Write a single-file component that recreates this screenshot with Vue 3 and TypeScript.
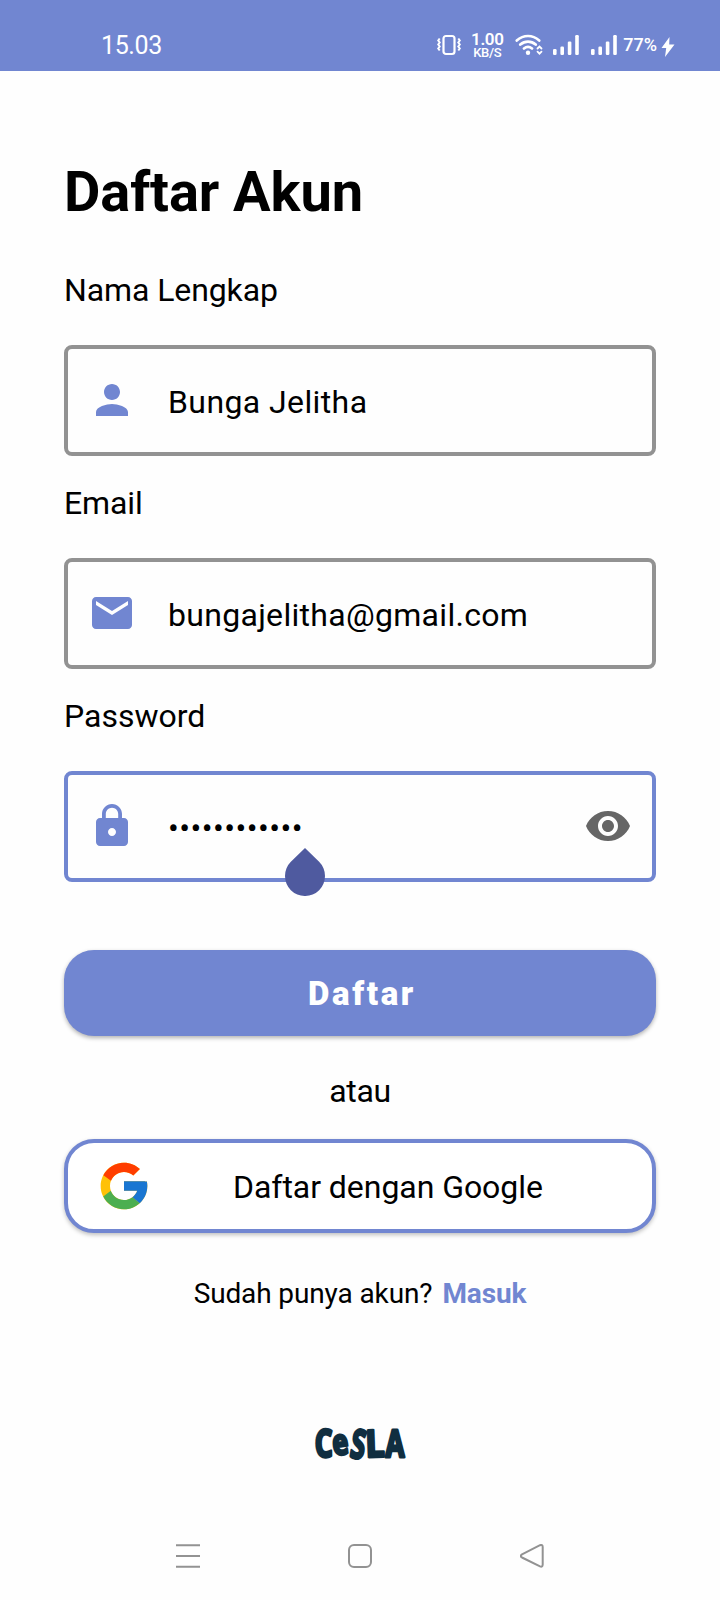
<script setup lang="ts">
import { ref } from 'vue'

interface Field {
  id: string
  label: string
  value: string
  path: string
  secret?: boolean
}

const fields = ref<Field[]>([
  {
    id: 'name',
    label: 'Nama Lengkap',
    value: 'Bunga Jelitha',
    path: 'M12 12c2.21 0 4-1.79 4-4s-1.79-4-4-4-4 1.79-4 4 1.79 4 4 4zm0 2c-2.67 0-8 1.34-8 4v2h16v-2c0-2.66-5.33-4-8-4z',
  },
  {
    id: 'email',
    label: 'Email',
    value: 'bungajelitha@gmail.com',
    path: 'M20 4H4c-1.1 0-1.99.9-1.99 2L2 18c0 1.1.9 2 2 2h16c1.1 0 2-.9 2-2V6c0-1.100-.9-2-2-2zm0 4l-8 5-8-5V6l8 5 8-5v2z',
  },
  {
    id: 'password',
    label: 'Password',
    value: '••••••••••••',
    secret: true,
    path: 'M18 8h-1V6c0-2.76-2.240-5-5-5S7 3.240 7 6v2H6c-1.100 0-2 .9-2 2v10c0 1.100.9 2 2 2h12c1.100 0 2-.9 2-2V10c0-1.100-.9-2-2-2zm-6 9c-1.100 0-2-.9-2-2s.9-2 2-2 2 .9 2 2-.9 2-2 2zm3.100-9H8.900V6c0-1.710 1.390-3.100 3.100-3.100s3.100 1.390 3.100 3.100v2z',
  },
])
</script>

<template>
  <div class="screen">
    <header class="status">
      <span class="clock">15.03</span>
      <div class="indicators">
        <svg class="vibrate" width="24" height="22" viewBox="0 0 24 22" fill="none" stroke="#fff">
          <rect x="6.500" y="2" width="11" height="18" rx="2.500" stroke-width="2.200" />
          <path d="M2.700 4.500l-1.500 2 1.500 2-1.500 2 1.500 2-1.500 2 1.500 2M21.300 4.500l1.500 2-1.500 2 1.500 2-1.500 2 1.500 2-1.500 2" stroke-width="2" />
        </svg>
        <div class="rate"><b>1.00</b><span>KB/S</span></div>
        <svg class="wifi" width="28" height="22" viewBox="0 0 28 22" fill="none" stroke="#fff" stroke-width="2.700" stroke-linecap="round">
          <path d="M1.800 6.500C8.500.5 17.500.5 24.200 6.500M5.300 10.600c4.600-4 10.800-4 15.400 0M9 14.500c2.400-2 5.600-2 8 0" />
          <circle cx="13" cy="18.800" r="2.200" fill="#fff" stroke="none" />
          <path d="M22.500 14.500l2-2 2 2M22.500 17.700l2 2 2-2" stroke-width="1.800" />
        </svg>
        <svg v-for="n in 2" :key="n" class="signal" width="26" height="22" viewBox="0 0 26 22" fill="#fff">
          <rect x="0" y="15" width="3.600" height="6" rx="1.200" />
          <rect x="7.400" y="12.500" width="3.600" height="8.500" rx="1.200" />
          <rect x="14.800" y="7.500" width="3.600" height="13.500" rx="1.200" />
          <rect x="22.200" y="1" width="3.600" height="20" rx="1.200" />
        </svg>
        <span class="battery">77%</span>
        <svg class="bolt" width="14" height="20" viewBox="0 0 14 20" fill="#fff">
          <path d="M8.500 0L.5 11H5.200L4 20L13.500 7.500H8.200z" />
        </svg>
      </div>
    </header>

    <main class="form">
      <h1>Daftar Akun</h1>
      <div v-for="f in fields" :key="f.id" class="group">
        <label :class="f.id">{{ f.label }}</label>
        <div class="field" :class="{ active: f.secret }">
          <svg class="lead" viewBox="0 0 24 24"><path :d="f.path" /></svg>
          <span class="value" :class="f.id">{{ f.value }}</span>
          <svg v-if="f.secret" class="eye" viewBox="0 0 24 24">
            <path d="M12 4.500C7 4.500 2.730 7.610 1 12c1.730 4.390 6 7.500 11 7.500s9.270-3.110 11-7.500c-1.730-4.390-6-7.500-11-7.500zM12 17c-2.760 0-5-2.240-5-5s2.240-5 5-5 5 2.240 5 5-2.240 5-5 5zm0-8c-1.660 0-3 1.340-3 3s1.340 3 3 3 3-1.340 3-3-1.340-3-3-3z" />
          </svg>
          <svg v-if="f.secret" class="handle" viewBox="0 0 40 48">
            <path d="M20 0L34.140 13.860A20 20 0 1 1 5.860 13.860z" />
          </svg>
        </div>
      </div>

      <button class="submit"><span>Daftar</span></button>
      <p class="or">atau</p>
      <button class="google">
        <svg viewBox="0 0 48 48">
          <path fill="#FFC107" d="M43.611 20.083H42V20H24v8h11.303c-1.649 4.657-6.080 8-11.303 8-6.627 0-12-5.373-12-12s5.373-12 12-12c3.059 0 5.842 1.154 7.961 3.039l5.657-5.657C34.046 6.053 29.268 4 24 4 12.955 4 4 12.955 4 24s8.955 20 20 20 20-8.955 20-20c0-1.341-.138-2.650-.389-3.917z" />
          <path fill="#FF3D00" d="M6.306 14.691l6.571 4.819C14.655 15.108 18.961 12 24 12c3.059 0 5.842 1.154 7.961 3.039l5.657-5.657C34.046 6.053 29.268 4 24 4 16.318 4 9.656 8.337 6.306 14.691z" />
          <path fill="#4CAF50" d="M24 44c5.166 0 9.860-1.977 13.409-5.192l-6.190-5.238C29.211 35.091 26.715 36 24 36c-5.202 0-9.619-3.317-11.283-7.946l-6.522 5.025C9.505 39.556 16.227 44 24 44z" />
          <path fill="#1976D2" d="M43.611 20.083H42V20H24v8h11.303c-.792 2.237-2.231 4.166-4.087 5.571l6.193 5.238C36.971 39.205 44 34 44 24c0-1.341-.138-2.650-.389-3.917z" />
        </svg>
        <span>Daftar dengan Google</span>
      </button>
      <p class="login"><span>Sudah punya akun?</span><a>Masuk</a></p>
      <svg class="brand" width="112" height="72" viewBox="-8 -16 112 72">
        <text transform="translate(3 33) rotate(-1) scale(.74 1)" font-size="38">C</text>
        <text transform="translate(22 31.500) rotate(-8) scale(.76 1)" font-size="35">e</text>
        <text transform="translate(37 33) rotate(9) scale(.66 1)" font-size="40">S</text>
        <text transform="translate(54 33) rotate(-2) scale(.9 1)" font-size="37">L</text>
        <text transform="translate(73.500 32.500) scale(.74 1)" font-size="37">A</text>
      </svg>
    </main>

    <nav class="navbar">
      <svg viewBox="0 0 24 24"><path d="M0 1.200h24M0 12h24M0 22.800h24" /></svg>
      <svg viewBox="0 0 24 24"><rect x="1" y="1" width="22" height="22" rx="5" /></svg>
      <svg viewBox="0 0 24 24"><path d="M2 10.300L20 1.200Q22.600.3 22.700 3V20.500Q22.600 23.400 20 22.400L2 13.500Q-.5 12 2 10.300z" /></svg>
    </nav>
  </div>
</template>

<style>
body {
  margin: 0;
  background: #fff;
}
</style>

<style scoped>
.screen {
  box-sizing: border-box;
  width: 720px;
  height: 1600px;
  display: flex;
  flex-direction: column;
  overflow: hidden;
  background: #fefefe;
  color: #000;
  font-family: Roboto, "Liberation Sans", sans-serif;
}
.status {
  box-sizing: border-box;
  height: 71px;
  flex: none;
  display: flex;
  justify-content: space-between;
  padding: 34px 45px 0 101px;
  background: #7186d1;
  color: #fff;
}
.clock {
  font-size: 25px;
  line-height: 24px;
  letter-spacing: -0.4px;
}
.indicators {
  display: flex;
  align-items: flex-start;
}
.rate {
  width: 34px;
  margin: -2px 0 0 9px;
  display: flex;
  flex-direction: column;
  align-items: center;
  font-weight: 500;
}
.rate b {
  font-size: 17px;
  line-height: 15px;
  font-weight: 600;
  letter-spacing: -0.4px;
}
.rate span {
  font-size: 13px;
  line-height: 11px;
  font-weight: 500;
  letter-spacing: -0.3px;
}
.wifi {
  margin-left: 11px;
}
.signal {
  margin-left: 10px;
}
.signal + .signal {
  margin-left: 12px;
}
.battery {
  margin-left: 6px;
  font-size: 18px;
  line-height: 22px;
  font-weight: 500;
}
.bolt {
  margin: 3px 0 0 4px;
}
.form {
  flex: 1;
  padding: 0 64px;
  display: flex;
  flex-direction: column;
}
h1 {
  margin: 88px 0 0;
  height: 66px;
  font-size: 56px;
  line-height: 66px;
  font-weight: 700;
  letter-spacing: -0.1px;
}
.group {
  display: flex;
  flex-direction: column;
  padding-top: 28px;
}
h1 + .group {
  padding-top: 46px;
}
label {
  font-size: 32px;
  line-height: 38px;
  margin-bottom: 36px;
}
label.name,
label.email {
  letter-spacing: -0.1px;
}
.field {
  position: relative;
  box-sizing: border-box;
  height: 111px;
  display: flex;
  align-items: center;
  padding: 0 20px;
  border: 4px solid #929292;
  border-radius: 8px;
}
.field.active {
  border-color: #7186d1;
}
.lead {
  width: 48px;
  height: 48px;
  fill: #7186d1;
  margin-bottom: 1px;
}
.value {
  flex: 1;
  margin-left: 32px;
  padding-top: 3px;
  font-size: 32px;
  line-height: 38px;
  letter-spacing: 0.4px;
}
.value.email {
  letter-spacing: 0.3px;
}
.value.password {
  letter-spacing: 0.45px;
}
.eye {
  width: 48px;
  height: 48px;
  margin-bottom: 1px;
  fill: #666;
}
.handle {
  position: absolute;
  left: 217px;
  top: 73px;
  width: 40px;
  height: 48px;
  fill: #4f5a9f;
}
button {
  box-sizing: border-box;
  flex: none;
  font-family: inherit;
  color: #000;
  display: flex;
  align-items: center;
  padding: 0;
}
.submit {
  height: 86px;
  margin-top: 68px;
  justify-content: center;
  border: 0;
  border-radius: 30px;
  background: #7186d1;
  box-shadow: 0 2px 4px rgba(0, 0, 0, 0.3);
  color: #fff;
  font-size: 33px;
  line-height: 38px;
  font-weight: 900;
  letter-spacing: 2.600px;
}
.submit span {
  padding: 2px 0 0 4px;
}
p {
  margin: 0;
}
.or {
  margin-top: 36px;
  text-align: center;
  font-size: 32px;
  line-height: 38px;
  letter-spacing: -0.4px;
}
.google {
  height: 94px;
  margin-top: 29px;
  border: 4px solid #7186d1;
  border-radius: 30px;
  background: #fff;
  box-shadow: 0 2px 4px rgba(0, 0, 0, 0.25);
  font-size: 32px;
}
.google svg {
  width: 56px;
  height: 56px;
  margin-left: 28px;
}
.google span {
  margin-left: 81px;
  padding-top: 2px;
  letter-spacing: -0.05px;
}
.login {
  margin-top: 44px;
  display: flex;
  justify-content: center;
  gap: 10px;
  font-size: 28px;
  line-height: 34px;
  letter-spacing: -0.12px;
}
.login a {
  font-weight: 700;
  color: #7186d1;
}
.brand {
  align-self: center;
  margin-top: 97px;
}
.brand text {
  font-family: "Open Sans", sans-serif;
  font-weight: 700;
  fill: #102e40;
  stroke: #102e40;
  stroke-width: 3px;
  stroke-linejoin: round;
}
.navbar {
  flex: none;
  height: 56px;
  padding: 0 176px;
  display: flex;
  justify-content: space-between;
}
.navbar svg {
  width: 24px;
  height: 24px;
  fill: none;
  stroke: #929292;
  stroke-width: 2;
}
</style>
